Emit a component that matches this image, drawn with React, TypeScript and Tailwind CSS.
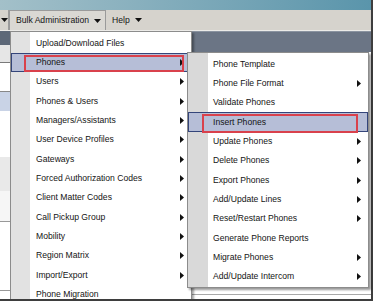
import React from 'react';

const mainItems: { label: string; sub?: boolean }[] = [
  { label: 'Upload/Download Files' },
  { label: 'Phones', sub: true },
  { label: 'Users', sub: true },
  { label: 'Phones & Users', sub: true },
  { label: 'Managers/Assistants', sub: true },
  { label: 'User Device Profiles', sub: true },
  { label: 'Gateways', sub: true },
  { label: 'Forced Authorization Codes', sub: true },
  { label: 'Client Matter Codes', sub: true },
  { label: 'Call Pickup Group', sub: true },
  { label: 'Mobility', sub: true },
  { label: 'Region Matrix', sub: true },
  { label: 'Import/Export', sub: true },
  { label: 'Phone Migration' },
];

const phoneItems: { label: string; sub?: boolean }[] = [
  { label: 'Phone Template' },
  { label: 'Phone File Format', sub: true },
  { label: 'Validate Phones' },
  { label: 'Insert Phones' },
  { label: 'Update Phones', sub: true },
  { label: 'Delete Phones', sub: true },
  { label: 'Export Phones', sub: true },
  { label: 'Add/Update Lines', sub: true },
  { label: 'Reset/Restart Phones', sub: true },
  { label: 'Generate Phone Reports' },
  { label: 'Migrate Phones', sub: true },
  { label: 'Add/Update Intercom', sub: true },
];

function RightArrow() {
  return (
    <svg width="4" height="7" viewBox="0 0 4 7" className="shrink-0">
      <path d="M0 0L4 3.5L0 7z" fill="#111" />
    </svg>
  );
}

function DownArrow() {
  return (
    <svg width="7" height="4" viewBox="0 0 7 4" className="shrink-0">
      <path d="M0 0H7L3.5 4z" fill="#111" />
    </svg>
  );
}

function MenuRow({ label, sub, active, marked, arrowPad }: { label: string; sub?: boolean; active?: boolean; marked?: string; arrowPad: string }) {
  return (
    <div
      className={
        'relative flex items-center h-[19.36px] pl-[25px] ' +
        arrowPad +
        (active ? ' bg-[#b6bed7] outline outline-1 -outline-offset-1 outline-[#34457a]' : '')
      }
    >
      <span className="flex-1 whitespace-nowrap">{label}</span>
      {sub && <RightArrow />}
      {marked && <div className={'absolute border-2 border-[#d9414c] ' + marked} />}
    </div>
  );
}

export default function App() {
  return (
    <div
      className="relative w-[376px] h-[305px] overflow-hidden bg-white text-[8.6px] text-[#141414]"
      style={{ fontFamily: '"Liberation Sans", Arial, sans-serif' }}
    >
      {/* page behind the menus */}
      <div className="w-[373px] h-[301px] flex flex-col border-r-2 border-b-2 border-[#3e3e3e]">
        <div className="h-[10px] bg-gradient-to-r from-[#a3c0c9] to-[#5a95ab]" />
        <div className="h-[21px] bg-[#d6d3cd] flex items-stretch border-b border-[#ecebe8]">
          <div className="w-[9px] flex items-center pl-[1px] border-r border-[#9c9c9c]">
            <DownArrow />
          </div>
          <div className="w-[97px] flex items-center gap-[5px] pl-[6px] border-x border-t border-[#9a9a9a] bg-[#dad8d3]">
            <span className="whitespace-nowrap">Bulk Administration</span>
            <DownArrow />
          </div>
          <div className="flex items-center gap-[5px] pl-[6px] pr-[6px]">
            <span>Help</span>
            <DownArrow />
          </div>
        </div>
        <div className="flex-1 flex">
          <div className="w-[10px] flex flex-col">
            <div className="h-[14px] bg-[#5d6878]" />
            <div className="h-[18px] bg-[#e6e6e6] border-b border-[#7a7a7a]" />
            <div className="h-[29px] bg-white border-b border-[#888]" />
            <div className="h-[19px] bg-[#c9d3e6]" />
            <div className="h-[46px] bg-white" />
            <div className="h-[34px] bg-[#e9e9e9]" />
            <div className="h-[31px] bg-[#f6f6f6] border-b border-[#999]" />
            <div className="h-[69px] bg-white border-b border-[#999]" />
            <div className="flex-1 bg-white" />
          </div>
          <div className="flex-1 flex flex-col">
            <div className="h-[21px] bg-[#6b7585] border-t border-[#8a93a0]" />
            <div className="flex-1 flex flex-col justify-end">
              <div className="h-[5px] border-t border-[#a8a8a8]" />
            </div>
          </div>
        </div>
      </div>

      {/* Bulk Administration menu */}
      <div className="absolute left-[10px] top-[31px] w-[182px] h-[290px] bg-white border border-[#8c8c8c] pt-[1.3px] shadow-[2px_2px_2px_rgba(0,0,0,0.35)]">
        <div className="absolute left-0 top-0 bottom-0 w-[19px] bg-[#e2e2e2]" />
        <div className="relative">
          {mainItems.map((it) => (
            <MenuRow
              key={it.label}
              label={it.label}
              sub={it.sub}
              active={it.label === 'Phones'}
              marked={it.label === 'Phones' ? 'left-[13px] top-[2px] w-[160px] h-[17px]' : undefined}
              arrowPad="pr-[7px]"
            />
          ))}
        </div>
      </div>

      {/* Phones submenu */}
      <div className="absolute left-[187px] top-[52px] w-[182px] bg-white border border-[#8c8c8c] pt-[1.3px] pb-[0.5px] shadow-[2px_2px_2px_rgba(0,0,0,0.4)]">
        <div className="absolute left-0 top-0 bottom-0 w-[20px] bg-[#d9d9d9]" />
        <div className="relative">
          {phoneItems.map((it) => (
            <MenuRow
              key={it.label}
              label={it.label}
              sub={it.sub}
              active={it.label === 'Insert Phones'}
              marked={it.label === 'Insert Phones' ? 'left-[14px] top-[2px] w-[156px] h-[19px]' : undefined}
              arrowPad="pr-[7px]"
            />
          ))}
        </div>
      </div>

      {/* frame edge over the cropped menu */}
      <div className="absolute left-0 top-[299px] w-[373px] h-[2px] bg-[#3e3e3e]" />
      <div className="absolute left-0 top-[301px] w-[376px] h-[4px] bg-white" />
    </div>
  );
}
